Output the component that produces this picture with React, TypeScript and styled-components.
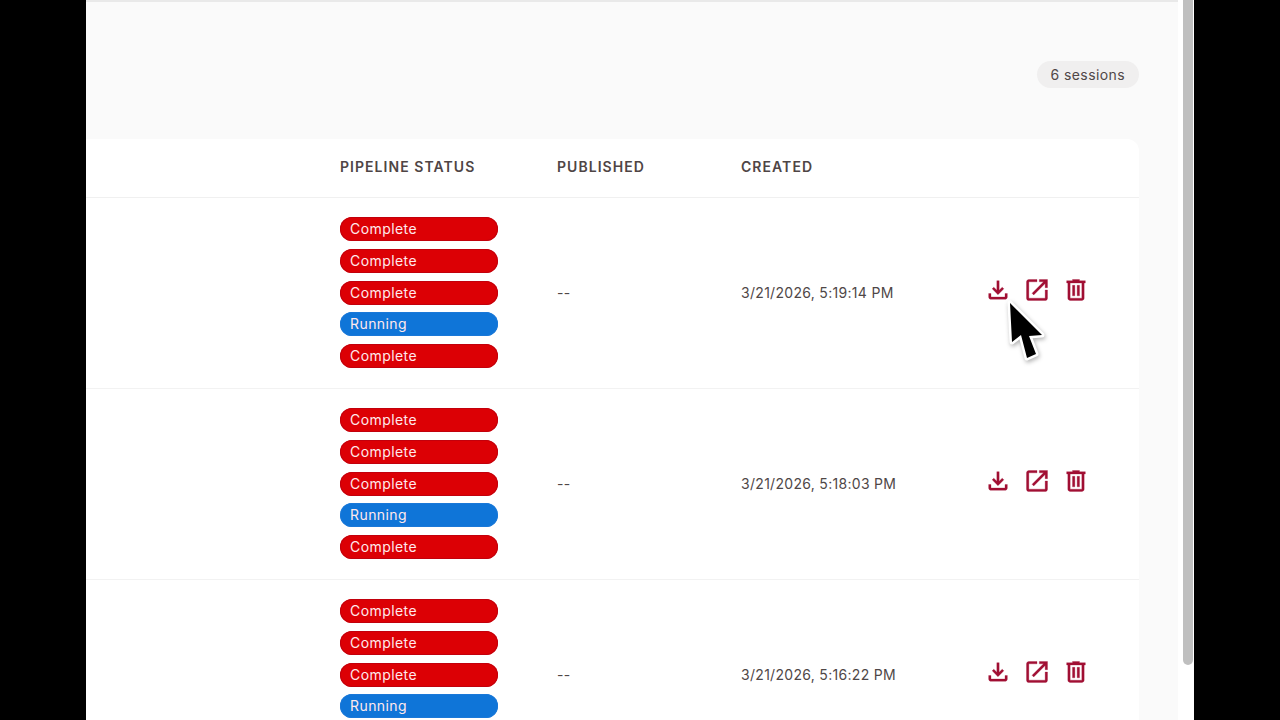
import React from 'react'
import styled, { createGlobalStyle } from 'styled-components'

type Status = 'Complete' | 'Running'

const sessions: { created: string; statuses: Status[] }[] = [
  { created: '3/21/2026, 5:19:14 PM', statuses: ['Complete', 'Complete', 'Complete', 'Running', 'Complete'] },
  { created: '3/21/2026, 5:18:03 PM', statuses: ['Complete', 'Complete', 'Complete', 'Running', 'Complete'] },
  { created: '3/21/2026, 5:16:22 PM', statuses: ['Complete', 'Complete', 'Complete', 'Running', 'Complete'] },
]

const iconPaths = [
  'M18 15v3H6v-3H4v3c0 1.1.9 2 2 2h12c1.1 0 2-.9 2-2v-3h-2zm-1-4-1.41-1.41L13 12.17V4h-2v8.17L8.41 9.59 7 11l5 5 5-5z',
  'M19 19H5V5h7V3H5c-1.11 0-2 .9-2 2v14c0 1.1.89 2 2 2h14c1.1 0 2-.9 2-2v-7h-2v7zM14 3v2h3.59l-9.83 9.83 1.41 1.41L19 6.41V10h2V3h-7z',
  'M7 21q-.825 0-1.412-.587Q5 19.825 5 19V6H4V4h5V3h6v1h5v2h-1v13q0 .825-.587 1.413Q17.825 21 17 21ZM17 6H7v13h10ZM9 17h2V8H9Zm4 0h2V8h-2Z',
]

const App = () => {
  return (
    <>
      <GlobalStyle />
      <Frame>
        <Page>
          <TopLine />
          <CountBar>
            <CountChip>6 sessions</CountChip>
          </CountBar>
          <Card>
            <HeaderRow>
              <span />
              <HeadCell>Pipeline Status</HeadCell>
              <HeadCell>Published</HeadCell>
              <HeadCell>Created</HeadCell>
            </HeaderRow>
            {sessions.map((session) => (
              <SessionRow key={session.created}>
                <span />
                <PillStack>
                  {session.statuses.map((status, i) => (
                    <Pill key={i} $status={status}>{status}</Pill>
                  ))}
                </PillStack>
                <Cell>--</Cell>
                <Cell>{session.created}</Cell>
                <Actions>
                  {iconPaths.map((d) => (
                    <ActionIcon key={d} viewBox="0 0 24 24">
                      <path d={d} />
                    </ActionIcon>
                  ))}
                </Actions>
              </SessionRow>
            ))}
          </Card>
        </Page>
        <Gutter />
        <Scrollbar>
          <Thumb />
        </Scrollbar>
        <Cursor viewBox="0 0 50 66">
          <path
            d="M7 5 L9 44 L18 37 L24 60 L33 56 L26 38 L39 37 Z"
            fill="#000"
            stroke="#fff"
            strokeWidth="5"
            strokeLinejoin="round"
            paintOrder="stroke"
          />
        </Cursor>
      </Frame>
    </>
  )
}

const GlobalStyle = createGlobalStyle`
  html, body {
    margin: 0;
    height: 720px;
    overflow: hidden;
    background: #000;
    font-family: Inter, "Liberation Sans", sans-serif;
  }
`

const Frame = styled.div`
  position: relative;
  display: flex;
  width: 1108px;
  height: 720px;
  margin-left: 86px;
  overflow: hidden;
`

const Page = styled.main`
  width: 1092px;
  height: 720px;
  flex: none;
  background: #fafafa;
  overflow: hidden;
`

const TopLine = styled.div`
  height: 2px;
  background: #e9e9e9;
`

const CountBar = styled.div`
  display: flex;
  justify-content: flex-end;
  padding: 59px 39px 0 0;
  height: 78px;
  box-sizing: border-box;
`

const CountChip = styled.div`
  height: 27px;
  line-height: 27px;
  padding: 0 14px;
  border-radius: 14px;
  background: #f0efef;
  color: #4f4747;
  font-size: 14px;
  letter-spacing: 0.4px;
`

const Card = styled.section`
  width: 1053px;
  margin-top: 59px;
  background: #fff;
  border-top-right-radius: 12px;
`

const HeaderRow = styled.div`
  display: grid;
  grid-template-columns: 254px 217px 184px 243px 1fr;
  align-items: center;
  height: 58.5px;
  padding-bottom: 2px;
  box-sizing: border-box;
  border-bottom: 1px solid #f0f0f0;
`

const HeadCell = styled.div`
  color: #4f4545;
  font-size: 14px;
  font-weight: 600;
  letter-spacing: 1.05px;
  text-transform: uppercase;
  white-space: nowrap;
`

const SessionRow = styled.div`
  display: grid;
  grid-template-columns: 254px 217px 184px 243px 1fr;
  align-items: center;
  height: 191px;
  box-sizing: border-box;
  border-bottom: 1px solid #f2f2f2;
`

const PillStack = styled.div`
  display: flex;
  flex-direction: column;
  gap: 7.75px;
  width: 158px;
`

const Pill = styled.div<{ $status: Status }>`
  height: 24px;
  line-height: 24px;
  padding: 0 10px;
  border-radius: 12px;
  background: ${({ $status }) => ($status === 'Running' ? '#0f75d8' : '#dc0005')};
  box-shadow: inset 0 0 0 1px ${({ $status }) => ($status === 'Running' ? '#1a78d8' : '#c2000c')};
  color: #ffe9ec;
  font-size: 14px;
  letter-spacing: 0.42px;
`

const Cell = styled.div`
  color: #4f4747;
  font-size: 14px;
  letter-spacing: 0.3px;
  white-space: nowrap;
`

const Actions = styled.div`
  display: flex;
  gap: 11px;
  margin-top: -6px;
`

const ActionIcon = styled.svg`
  width: 28px;
  height: 28px;
  fill: #a10f33;
  stroke: #a10f33;
  stroke-width: 0.25px;
`

const Gutter = styled.div`
  width: 5px;
  flex: none;
  background: #fff;
`

const Scrollbar = styled.div`
  width: 11px;
  flex: none;
  background: #fff;
`

const Thumb = styled.div`
  width: 10px;
  height: 665px;
  background: #bfbfbf;
  border-radius: 0 0 5px 5px;
`

const Cursor = styled.svg`
  position: absolute;
  left: 917px;
  top: 298px;
  width: 50px;
  height: 66px;
  filter: drop-shadow(1px 2px 2px rgba(0, 0, 0, 0.3));
`

export default App
